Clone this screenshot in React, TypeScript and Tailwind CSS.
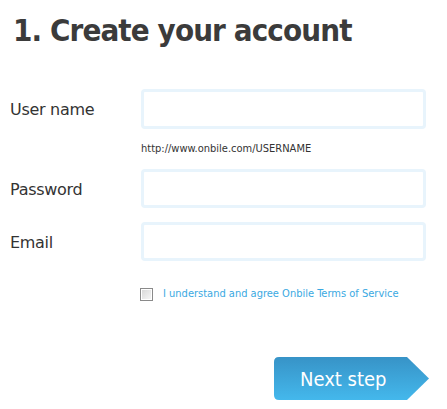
import React from "react";

export default function App() {
  const font = { fontFamily: '"DejaVu Sans", "Noto Sans", sans-serif' };
  const cond = { fontFamily: '"DejaVu Sans Condensed", "DejaVu Sans", sans-serif' };
  return (
    <div className="w-[447px] h-[409px] bg-white overflow-hidden" style={font}>
      <h1
        className="pl-[13px] pt-[10px] h-[89px] text-[31px] leading-[40px] font-bold text-[#3b3b3b] tracking-[-0.9px]"
        style={cond}
      >
        1. Create your account
      </h1>
      <div className="flex flex-col">
        <div className="flex items-center h-[40px]">
          <label className="w-[141px] pl-[10px] pt-[2px] text-[16px] text-[#333] tracking-[-0.3px]">User name</label>
          <input className="w-[285px] h-[40px] rounded-[4px] border-[3px] border-[#e8f4fc] bg-white outline-none" />
        </div>
        <div className="pl-[141px] mt-[13px] text-[11px] leading-[14px] text-[#333]" style={cond}>
          http://www.onbile.com/USERNAME
        </div>
        <div className="flex items-center h-[39px] mt-[13px]">
          <label className="w-[141px] pl-[10px] pt-[2px] text-[16px] text-[#333] tracking-[-0.3px]">Password</label>
          <input type="password" className="w-[285px] h-[39px] rounded-[4px] border-[3px] border-[#e8f4fc] bg-white outline-none" />
        </div>
        <div className="flex items-center h-[39px] mt-[14px]">
          <label className="w-[141px] pl-[10px] pt-[2px] text-[16px] text-[#333] tracking-[-0.3px]">Email</label>
          <input className="w-[285px] h-[39px] rounded-[4px] border-[3px] border-[#e8f4fc] bg-white outline-none" />
        </div>
        <div className="flex items-center pl-[140px] mt-[26px] h-[14px] gap-[10px]">
          <span className="w-[13px] h-[13px] border border-[#8a8a8a] bg-gradient-to-br from-[#d6d6d6] to-[#f8f8f8] shadow-[inset_0_0_0_1px_#fff]" />
          <span className="text-[11px] text-[#3aa9e2]" style={cond}>
            I understand and agree Onbile Terms of Service
          </span>
        </div>
        <div className="flex justify-start pl-[274px] mt-[56px]">
          <div className="relative h-[43px] w-[157px]">
            <svg width="157" height="43" className="absolute inset-0">
              <defs>
                <linearGradient id="g" x1="0" y1="0" x2="0" y2="1">
                  <stop offset="0" stopColor="#3793c7" />
                  <stop offset="1" stopColor="#44b8ec" />
                </linearGradient>
              </defs>
              <path d="M5 0 H133 L155 21.5 L133 43 H5 Q0 43 0 38 V5 Q0 0 5 0 Z" fill="url(#g)" />
            </svg>
            <span
              className="absolute left-[26px] top-0 h-[43px] flex items-center text-[20px] text-white"
              style={cond}
            >
              Next step
            </span>
          </div>
        </div>
      </div>
    </div>
  );
}
